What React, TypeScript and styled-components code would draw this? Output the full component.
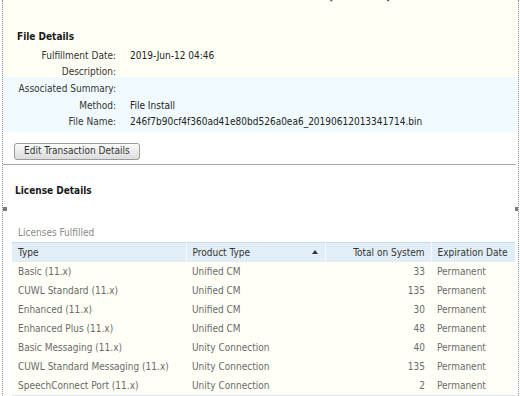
import styled, { createGlobalStyle } from 'styled-components';

const GlobalStyle = createGlobalStyle`
  html, body {
    margin: 0;
    padding: 0;
    background: #ffffff;
  }
  body {
    font-family: "DejaVu Sans Condensed", "DejaVu Sans", sans-serif;
    font-stretch: condensed;
    font-size: 10px;
    color: #333333;
  }
`;

const Page = styled.div`
  position: relative;
  width: 515px;
  height: 396px;
  margin-left: 2px;
  border-left: 1px dotted #8c8c8c;
  border-right: 1px dotted #8c8c8c;
  overflow: hidden;
  background: #ffffff;
`;

const Cream = styled.div`
  background: #fffff6;
  height: 77px;
`;

const TitleClip = styled.div`
  height: 3px;
  overflow: hidden;
  text-align: center;
`;

const Title = styled.div`
  margin-top: -11px;
  padding-left: 118px;
  font-size: 13px;
  line-height: 14px;
  font-weight: bold;
  color: #2b4a6b;
`;

const Heading = styled.div<{ indent?: number; top?: number }>`
  font-weight: bold;
  font-size: 10px;
  color: #1a1a1a;
  padding-left: ${(p) => p.indent ?? 14}px;
  padding-top: ${(p) => p.top ?? 0}px;
  line-height: 14px;
`;

const Blue = styled.div`
  background: #f1fbff;
  height: 55px;
  padding-top: 3px;
  box-sizing: border-box;
`;

const DetailRows = styled.div`
  padding-top: 4px;
`;

const Row = styled.div<{ h?: number }>`
  display: grid;
  grid-template-columns: 113px 1fr;
  column-gap: 14px;
  height: ${(p) => p.h ?? 17}px;
  line-height: ${(p) => p.h ?? 17}px;
`;

const Label = styled.div`
  text-align: right;
  color: #333333;
  white-space: nowrap;
`;

const Value = styled.div`
  color: #222222;
  white-space: nowrap;
`;

const ButtonBar = styled.div`
  padding: 11px 0 0 11px;
  height: 33px;
  box-sizing: border-box;
  border-bottom: 1px solid #a9a9a9;
  margin-right: 2px;
`;

const Button = styled.button`
  font-family: inherit;
  font-stretch: condensed;
  font-size: 10px;
  color: #333333;
  height: 17px;
  padding: 0 9px 1px;
  border: 1px solid #9a9a9a;
  border-radius: 3px;
  background: linear-gradient(#fbfbfb, #dcdcdc);
  box-shadow: inset 0 1px 0 #ffffff;
  line-height: 14px;
`;

const Handle = styled.div<{ side: 'left' | 'right' }>`
  position: absolute;
  top: 207px;
  ${(p) => (p.side === 'left' ? 'left: 0px;' : 'right: -1px;')}
  width: 4px;
  height: 4px;
  background: #7a7a7a;
`;

const LicenseSection = styled.div`
  padding-top: 19px;
`;

const SubTitle = styled.div`
  color: #8a8a8a;
  padding-left: 15px;
  margin-top: 28px;
  line-height: 14px;
`;

const Table = styled.table`
  margin: 2px 0 0 9px;
  width: 503px;
  border-collapse: collapse;
  table-layout: fixed;
  border-top: 1px solid #c8d8e4;
  border-bottom: 2px solid #d9e8f1;
`;

const Th = styled.th<{ align?: 'left' | 'right' }>`
  background: #e2eef7;
  font-weight: normal;
  color: #333333;
  text-align: ${(p) => p.align ?? 'left'};
  height: 19px;
  padding: 0 6px;
  border-left: 1px solid #f6fafd;
  position: relative;
  white-space: nowrap;
  &:first-child {
    border-left: none;
  }
`;

const SortArrow = styled.span`
  position: absolute;
  right: 7px;
  top: 7px;
  width: 0;
  height: 0;
  border-left: 3px solid transparent;
  border-right: 3px solid transparent;
  border-bottom: 4px solid #333333;
`;

const Td = styled.td<{ align?: 'left' | 'right' }>`
  background: #fffff7;
  color: #6a6a6a;
  height: 19px;
  padding: 0 6px;
  text-align: ${(p) => p.align ?? 'left'};
  white-space: nowrap;
`;

const licenses = [
  { type: 'Basic (11.x)', product: 'Unified CM', total: 33 },
  { type: 'CUWL Standard (11.x)', product: 'Unified CM', total: 135 },
  { type: 'Enhanced (11.x)', product: 'Unified CM', total: 30 },
  { type: 'Enhanced Plus (11.x)', product: 'Unified CM', total: 48 },
  { type: 'Basic Messaging (11.x)', product: 'Unity Connection', total: 40 },
  { type: 'CUWL Standard Messaging (11.x)', product: 'Unity Connection', total: 135 },
  { type: 'SpeechConnect Port (11.x)', product: 'Unity Connection', total: 2 },
];

export default function App() {
  return (
    <>
      <GlobalStyle />
      <Page>
        <Cream>
          <TitleClip>
            <Title>Transaction (Fulfilled)</Title>
          </TitleClip>
          <Heading top={27}>File Details</Heading>
          <DetailRows>
            <Row h={16}>
              <Label>Fulfillment Date:</Label>
              <Value>2019-Jun-12 04:46</Value>
            </Row>
            <Row h={15}>
              <Label>Description:</Label>
              <Value />
            </Row>
          </DetailRows>
        </Cream>
        <Blue>
          <Row>
            <Label>Associated Summary:</Label>
            <Value />
          </Row>
          <Row>
            <Label>Method:</Label>
            <Value>File Install</Value>
          </Row>
          <Row h={16}>
            <Label>File Name:</Label>
            <Value>246f7b90cf4f360ad41e80bd526a0ea6_20190612013341714.bin</Value>
          </Row>
        </Blue>
        <ButtonBar>
          <Button>Edit Transaction Details</Button>
        </ButtonBar>
        <LicenseSection>
          <Heading indent={12}>License Details</Heading>
          <SubTitle>Licenses Fulfilled</SubTitle>
          <Table>
            <colgroup>
              <col style={{ width: 174 }} />
              <col style={{ width: 139 }} />
              <col style={{ width: 106 }} />
              <col style={{ width: 84 }} />
            </colgroup>
            <thead>
              <tr>
                <Th>Type</Th>
                <Th>
                  Product Type
                  <SortArrow />
                </Th>
                <Th align="right">Total on System</Th>
                <Th>Expiration Date</Th>
              </tr>
            </thead>
            <tbody>
              {licenses.map((l) => (
                <tr key={l.type}>
                  <Td>{l.type}</Td>
                  <Td>{l.product}</Td>
                  <Td align="right">{l.total}</Td>
                  <Td>Permanent</Td>
                </tr>
              ))}
            </tbody>
          </Table>
        </LicenseSection>
        <Handle side="left" />
        <Handle side="right" />
      </Page>
    </>
  );
}
